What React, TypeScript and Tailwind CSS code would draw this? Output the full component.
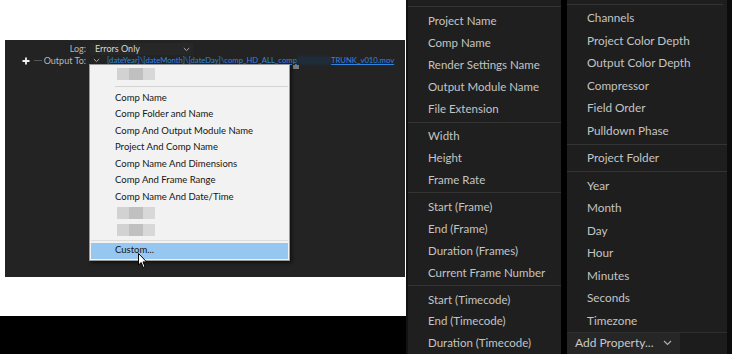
import React from "react"

const dark = { fontFamily: "Lato, 'Noto Sans', sans-serif" }

function MenuItem({ label, h = "h-[22px]", size = "text-[11.5px]" }: { label: string; h?: string; size?: string }) {
  return (
    <div className={`${h} ${size} flex items-center pl-[20px] text-[#c4c4c4] whitespace-nowrap`}>{label}</div>
  )
}

function Sep({ h = "h-[5px]" }: { h?: string }) {
  return (
    <div className={`${h} flex items-center`}>
      <div className="h-px w-full bg-[#343434]" />
    </div>
  )
}

function PopItem({ label }: { label: string }) {
  return <div className="h-[16.5px] flex items-center pl-[25px] text-[9.5px] text-[#151515] whitespace-nowrap">{label}</div>
}

function Blurred({ w = "w-[38px]" }: { w?: string }) {
  return (
    <div className="h-[16.5px] flex items-center pl-[27px]">
      <div className={`h-[12px] ${w} flex blur-[0.6px]`}>
        <div className="w-[12px] bg-[#d2d2d2]" />
        <div className="w-[14px] bg-[#c0c0c0]" />
        <div className="flex-1 bg-[#d8d8d8]" />
      </div>
    </div>
  )
}

function Cursor() {
  return (
    <svg width="10" height="16" viewBox="0 0 10 16" className="absolute left-[48px] top-[188px]">
      <path d="M0.5 0.5 L0.5 12 L3.2 9.5 L5.2 14.5 L7 13.7 L5 8.9 L8.6 8.9 Z" fill="#ffffff" stroke="#000000" strokeWidth="1" />
    </svg>
  )
}

function LeftPanel() {
  return (
    <div className="w-[406px] h-full flex flex-col bg-white">
      <div className="h-[40px]" />
      <div className="ml-[5px] w-[400px] h-[237px] bg-[#232323] relative pt-[3px]" style={dark}>
        <div className="h-[12px] flex items-center">
          <div className="w-[82px] flex justify-end text-[9px] text-[#b8b8b8] pr-[1px]">Log:</div>
          <div className="ml-[3px] w-[103px] h-[12px] bg-[#272727] flex items-center justify-between pl-[5px] pr-[3px] text-[9px] text-[#d6d6d6]">
            <span>Errors Only</span>
            <svg width="7" height="5" viewBox="0 0 7 5"><path d="M0.8 1 L3.5 3.6 L6.2 1" stroke="#a8a8a8" strokeWidth="1" fill="none" /></svg>
          </div>
        </div>
        <div className="h-[11px] flex items-center">
          <div className="w-[82px] flex items-center">
            <svg width="8" height="8" viewBox="0 0 8 8" className="ml-[17px]"><path d="M4 0.5 V7.5 M0.5 4 H7.5" stroke="#f2f2f2" strokeWidth="1.8" /></svg>
            <div className="ml-[4px] w-[8px] h-px bg-[#555]" />
            <div className="ml-auto text-[9px] text-[#b8b8b8] pr-[1px]">Output To:</div>
          </div>
          <svg width="7" height="5" viewBox="0 0 7 5" className="ml-[6px]"><path d="M0.8 1 L3.5 3.6 L6.2 1" stroke="#a8a8a8" strokeWidth="1" fill="none" /></svg>
          <div className="ml-[7px] flex items-center text-[7.7px] text-[#2f86e0] underline whitespace-nowrap">
            <span>[dateYear]\[dateMonth]\[dateDay]\comp_HD_ALL_comp</span>
            <div className="w-[34px] h-[9px] bg-[#1f2c3a] blur-[1px]" />
            <span>TRUNK_v010.mov</span>
          </div>
        </div>
        <div className="absolute left-[288px] top-[25px] w-[6px] h-[4px] bg-[#7a7a7a]" />
        <div className="absolute left-[84px] top-[24px] w-[201px] h-[197px] bg-[#f2f2f2] border border-[#9a9a9a] shadow-[2px_2px_3px_rgba(0,0,0,0.5)] pt-px flex flex-col">
          <Blurred />
          <div className="h-[7px] flex items-center pl-[25px] pr-px">
            <div className="h-px w-full bg-[#d4d4d4]" />
          </div>
          <PopItem label="Comp Name" />
          <PopItem label="Comp Folder and Name" />
          <PopItem label="Comp And Output Module Name" />
          <PopItem label="Project And Comp Name" />
          <PopItem label="Comp Name And Dimensions" />
          <PopItem label="Comp And Frame Range" />
          <PopItem label="Comp Name And Date/Time" />
          <Blurred />
          <Blurred />
          <div className="h-[4.5px] flex items-center px-[1px]">
            <div className="h-px w-full bg-[#dcdcdc]" />
          </div>
          <div className="mx-px h-[16px] bg-[#95c7f1] flex items-center pl-[24px] text-[9.5px] text-[#151515]">Custom...</div>
          <Cursor />
        </div>
      </div>
      <div className="h-[39px]" />
      <div className="flex-1 bg-black" />
    </div>
  )
}

function MiddleMenu() {
  return (
    <div className="w-[155px] h-full bg-[#1f1f1f] border-l-2 border-[#121212] flex flex-col" style={dark}>
      <div className="h-[6px]" />
      <div className="h-px bg-[#343434]" />
      <div className="h-[3px]" />
      <MenuItem label="Project Name" />
      <MenuItem label="Comp Name" />
      <MenuItem label="Render Settings Name" />
      <MenuItem label="Output Module Name" />
      <MenuItem label="File Extension" />
      <Sep />
      <MenuItem label="Width" />
      <MenuItem label="Height" />
      <MenuItem label="Frame Rate" />
      <Sep />
      <MenuItem label="Start (Frame)" />
      <MenuItem label="End (Frame)" />
      <MenuItem label="Duration (Frames)" />
      <MenuItem label="Current Frame Number" />
      <Sep />
      <MenuItem label="Start (Timecode)" />
      <MenuItem label="End (Timecode)" />
      <MenuItem label="Duration (Timecode)" />
    </div>
  )
}

function RightMenu() {
  const h = "h-[22.5px]"
  const s = "text-[11.75px]"
  return (
    <div className="w-[160px] h-full bg-[#1e1e1e] flex flex-col" style={dark}>
      <div className="h-[4px]" />
      <div className="h-px bg-[#343434] mr-[4px]" />
      <div className="h-[1.75px]" />
      {["Channels", "Project Color Depth", "Output Color Depth", "Compressor", "Field Order", "Pulldown Phase"].map((l) => (
        <MenuItem key={l} label={l} h={h} size={s} />
      ))}
      <Sep />
      <MenuItem label="Project Folder" h={h} size={s} />
      <Sep />
      {["Year", "Month", "Day", "Hour", "Minutes", "Seconds", "Timezone"].map((l) => (
        <MenuItem key={l} label={l} h={h} size={s} />
      ))}
      <div className="h-px bg-[#2e2e2e]" />
      <div className="flex-1 flex">
        <div className="w-[113px] bg-[#262626] flex items-center justify-between pl-[8px] pr-[8px] text-[12px] text-[#c8c8c8]">
          <span>Add Property...</span>
          <svg width="9" height="6" viewBox="0 0 9 6"><path d="M1 1 L4.5 4.5 L8 1" stroke="#b0b0b0" strokeWidth="1.2" fill="none" /></svg>
        </div>
        <div className="flex-1 bg-[#1c1c1c]" />
      </div>
    </div>
  )
}

export default function App() {
  return (
    <div className="w-[732px] h-[354px] flex bg-black overflow-hidden">
      <LeftPanel />
      <MiddleMenu />
      <div className="w-[6px] h-full bg-black" />
      <RightMenu />
      <div className="flex-1 bg-[#0c0c0c]" />
    </div>
  )
}
